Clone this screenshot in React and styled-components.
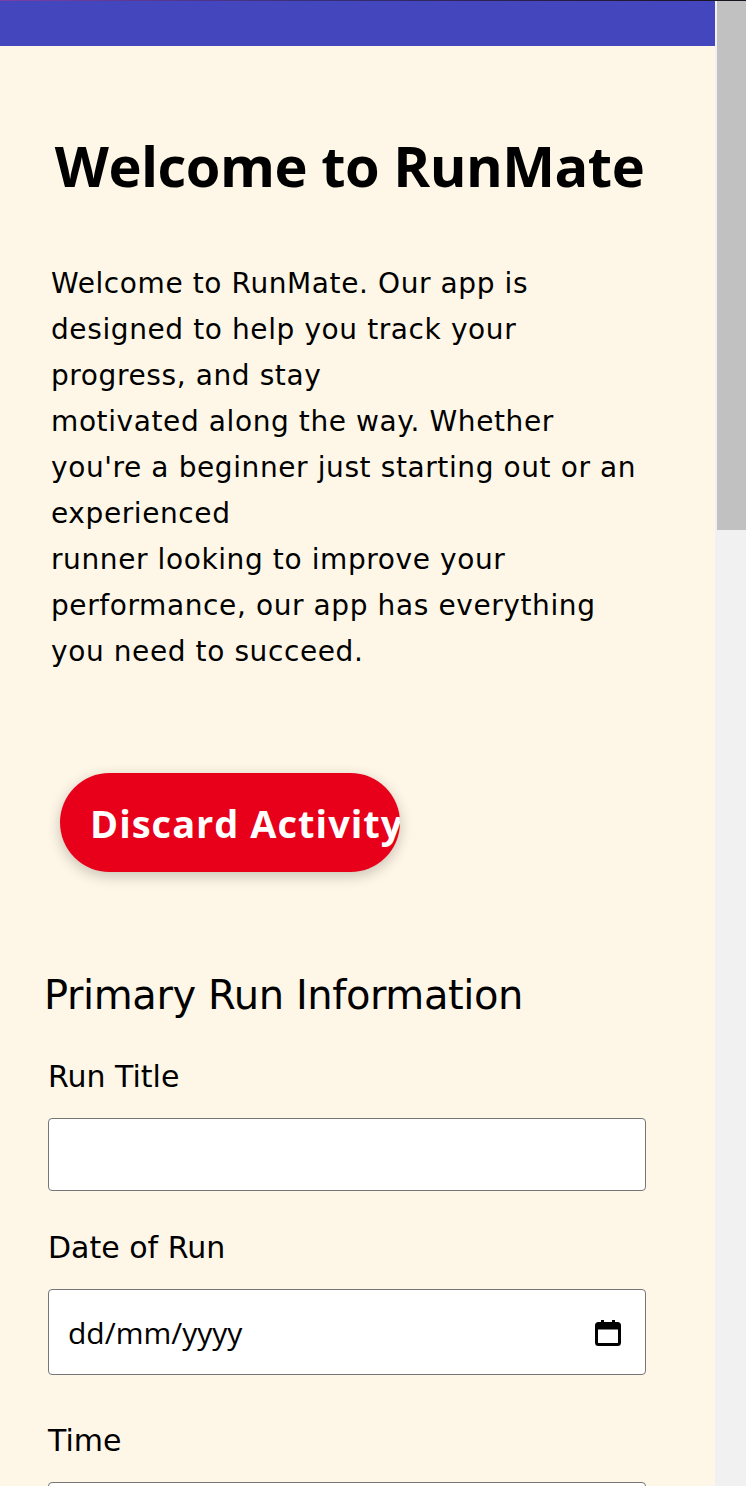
import React from "react";
import styled, { createGlobalStyle } from "styled-components";

const GlobalStyle = createGlobalStyle`
  html, body {
    margin: 0;
    padding: 0;
    background: #fef7e7;
  }
  body {
    font-family: "DejaVu Sans", "Open Sans", sans-serif;
    color: #000;
  }
  * { box-sizing: border-box; }
`;

const Page = styled.div`
  display: flex;
  flex-direction: column;
  background: #fef7e7;
`;

const TopLine = styled.div`
  height: 1px;
  background: linear-gradient(90deg, #7a3fa8 0%, #3a2f7a 40%, #16141e 100%);
`;

const Shell = styled.div`
  display: flex;
  align-items: stretch;
  min-height: 4180px;
`;

const Main = styled.main`
  flex: 1;
  display: flex;
  flex-direction: column;
  background: #fef7e7;
`;

const ScrollRail = styled.aside`
  width: 31px;
  flex: none;
  background: #f1f1f1;
  padding-left: 2px;
`;

const ScrollThumb = styled.div`
  height: 529px;
  background: #c1c1c1;
`;

const TopBar = styled.header`
  height: 45px;
  background: #4346bc;
`;

const Hero = styled.section`
  padding: 86px 0 0 51px;
  width: 648px;
  display: flex;
  flex-direction: column;
`;

const Title = styled.h1`
  margin: 0;
  font-family: "Open Sans", sans-serif;
  font-size: 56px;
  line-height: 67px;
  font-weight: 700;
  text-align: center;
  letter-spacing: -0.5px;
`;

const Intro = styled.p`
  margin: 62px 0 0;
  font-size: 28px;
  line-height: 46px;
  font-weight: 400;
  letter-spacing: 0.6px;
`;

const ButtonRow = styled.div`
  padding: 98px 0 0 60px;
`;

const DangerButton = styled.button`
  width: 340px;
  height: 99px;
  border: none;
  border-radius: 50px;
  background: #e8001a;
  color: #fff;
  font-family: "Open Sans", sans-serif;
  font-size: 38px;
  font-weight: 700;
  letter-spacing: 1px;
  text-align: left;
  padding: 0 0 0 30px;
  white-space: nowrap;
  overflow: hidden;
  box-shadow: 0 4px 14px rgba(0, 0, 0, 0.22);
  cursor: pointer;
`;

const Form = styled.form`
  padding: 96px 0 0 44px;
  width: 646px;
  display: flex;
  flex-direction: column;
`;

const SectionTitle = styled.h2`
  margin: 0 0 34px;
  font-size: 40px;
  line-height: 54px;
  font-weight: 400;
  letter-spacing: -0.4px;
`;

const Field = styled.div`
  display: flex;
  flex-direction: column;
  padding-left: 4px;
  margin-bottom: ${(p) => (p.$extra ? 45 : 36)}px;
`;

const Label = styled.label`
  font-size: 30px;
  line-height: 42px;
  margin-bottom: 20px;
`;

const TextInput = styled.input`
  width: 598px;
  height: 73px;
  border: 1.5px solid #767676;
  border-radius: 4px;
  background: #fff;
  font-family: "Open Sans", sans-serif;
  font-size: 30px;
  padding: 0 20px;
`;

const DateBox = styled.div`
  width: 598px;
  height: 86px;
  border: 1.5px solid #767676;
  border-radius: 4px;
  background: #fff;
  display: flex;
  align-items: center;
  padding: 0 24px 0 19px;
`;

const DateInput = styled.input`
  flex: 1;
  border: none;
  outline: none;
  background: transparent;
  font-family: "Open Sans", sans-serif;
  font-size: 30px;
  padding: 0;
  &::placeholder {
    color: #000;
    opacity: 1;
  }
`;

const TextArea = styled.textarea`
  width: 598px;
  height: 180px;
  border: 1.5px solid #767676;
  border-radius: 4px;
  background: #fff;
  font-family: "Open Sans", sans-serif;
  font-size: 30px;
  padding: 12px 20px;
  resize: vertical;
`;

const CalendarIcon = () => (
  <svg width="26" height="27" viewBox="0 0 26 27" aria-hidden="true">
    <rect x="1.5" y="4.5" width="23" height="21" rx="2" fill="none" stroke="#000" strokeWidth="3" />
    <rect x="1.5" y="4.5" width="23" height="6" fill="#000" />
    <rect x="6" y="1" width="3" height="5" fill="#000" />
    <rect x="17" y="1" width="3" height="5" fill="#000" />
  </svg>
);

export default function App() {
  return (
    <>
      <GlobalStyle />
      <Page>
        <TopLine />
        <Shell>
          <Main>
            <TopBar />
            <Hero>
              <Title>Welcome to RunMate</Title>
              <Intro>
                Welcome to RunMate. Our app is designed to help you track your progress, and stay
                <br />
                motivated along the way. Whether you're a beginner just starting out or an experienced
                <br />
                runner looking to improve your performance, our app has everything you need to succeed.
              </Intro>
            </Hero>
            <ButtonRow>
              <DangerButton type="button">Discard Activity</DangerButton>
            </ButtonRow>
            <Form onSubmit={(e) => e.preventDefault()}>
              <SectionTitle>Primary Run Information</SectionTitle>
              <Field>
                <Label htmlFor="title">Run Title</Label>
                <TextInput id="title" type="text" />
              </Field>
              <Field $extra>
                <Label htmlFor="date">Date of Run</Label>
                <DateBox>
                  <DateInput id="date" type="text" placeholder="dd/mm/yyyy" />
                  <CalendarIcon />
                </DateBox>
              </Field>
              <Field>
                <Label htmlFor="time">Time</Label>
                <TextInput id="time" type="text" />
              </Field>
              <Field>
                <Label htmlFor="distance">Distance (km)</Label>
                <TextInput id="distance" type="text" />
              </Field>
              <Field>
                <Label htmlFor="duration">Duration</Label>
                <TextInput id="duration" type="text" />
              </Field>
              <SectionTitle>Additional Details</SectionTitle>
              <Field>
                <Label htmlFor="pace">Average Pace</Label>
                <TextInput id="pace" type="text" />
              </Field>
              <Field>
                <Label htmlFor="hr">Average Heart Rate</Label>
                <TextInput id="hr" type="text" />
              </Field>
              <Field>
                <Label htmlFor="notes">Notes</Label>
                <TextArea id="notes" />
              </Field>
            </Form>
          </Main>
          <ScrollRail aria-hidden="true">
            <ScrollThumb />
          </ScrollRail>
        </Shell>
      </Page>
    </>
  );
}
